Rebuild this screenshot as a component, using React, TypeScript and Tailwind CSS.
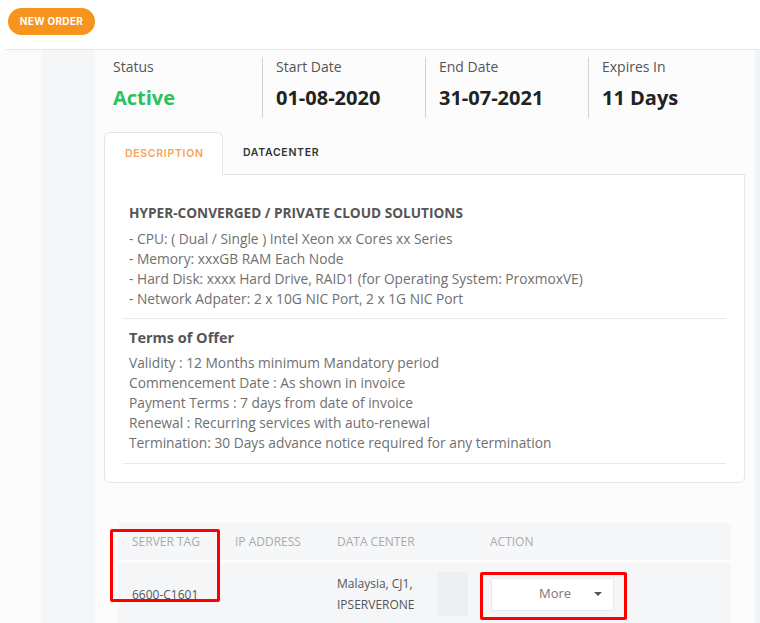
import React from 'react';

const stats = [
  { label: 'Status', value: 'Active', green: true },
  { label: 'Start Date', value: '01-08-2020' },
  { label: 'End Date', value: '31-07-2021' },
  { label: 'Expires In', value: '11 Days' },
];

const specs = [
  '- CPU: ( Dual / Single ) Intel Xeon xx Cores xx Series',
  '- Memory: xxxGB RAM Each Node',
  '- Hard Disk: xxxx Hard Drive, RAID1 (for Operating System: ProxmoxVE)',
  '- Network Adpater: 2 x 10G NIC Port, 2 x 1G NIC Port',
];

const terms = [
  'Validity : 12 Months minimum Mandatory period',
  'Commencement Date : As shown in invoice',
  'Payment Terms : 7 days from date of invoice',
  'Renewal : Recurring services with auto-renewal',
  'Termination: 30 Days advance notice required for any termination',
];

export default function App() {
  return (
    <div className="w-[760px] h-[623px] overflow-hidden bg-white font-['Open_Sans',sans-serif]">
      {/* --- Top bar --- */}
      <div className="h-[50px] ml-[5px] pl-[3px] pt-[7px] border-b border-[#e4e6e8]">
        <button className="h-[27px] w-[87px] rounded-full bg-[#f7941d] text-white text-[10px] font-bold tracking-[0.3px] font-['Inter',sans-serif]">
          NEW ORDER
        </button>
      </div>

      {/* --- Body --- */}
      <div className="flex h-[573px]">
        <div className="w-[41px] bg-[#fbfbfb]" />
        <div className="w-[54px] bg-[#f4f6f8]" />

        <main className="w-[660px] bg-[#fcfcfc] pl-[4px]">
          {/* Stats row */}
          <div className="flex mt-[7px]">
            {stats.map((s, i) => (
              <div
                key={s.label}
                className={
                  i === 0
                    ? 'w-[163px] h-[61px] pl-[14px]'
                    : 'w-[163px] h-[61px] pl-[13px] border-l border-[#cfd2d4]'
                }
              >
                <div className="text-[14px] leading-[20px] text-[#555]">{s.label}</div>
                <div
                  className={
                    s.green
                      ? 'mt-[7px] text-[20px] leading-[28px] font-bold text-[#2ac35b]'
                      : 'mt-[7px] text-[20px] leading-[28px] font-bold text-[#222]'
                  }
                >
                  {s.value}
                </div>
              </div>
            ))}
          </div>

          {/* Tabs */}
          <div className="ml-[5px] mt-[14px] w-[641px]">
            <div className="flex h-[42px]">
              <div className="w-[119px] h-[43px] pl-[20px] flex items-center border border-b-0 border-[#e3e5e7] rounded-t-md bg-white relative z-10 text-[10.5px] font-semibold tracking-[0.7px] text-[#f7a35a] font-['Inter',sans-serif]">
                DESCRIPTION
              </div>
              <div className="pl-[20px] flex items-center text-[10.5px] font-semibold tracking-[0.7px] text-[#333] font-['Inter',sans-serif]">
                DATACENTER
              </div>
            </div>
            <div className="h-[309px] border border-[#e3e5e7] rounded-b-md bg-white px-[18px]">
              <div className="pt-[28px] pb-[9px] pl-[6px] border-b border-[#e6e8ea]">
                <div className="text-[13.65px] leading-[20px] font-bold text-[#555]">
                  HYPER-CONVERGED / PRIVATE CLOUD SOLUTIONS
                </div>
                <div className="mt-[6px]">
                  {specs.map((t) => (
                    <div key={t} className="text-[13.75px] leading-[20px] text-[#707070]">{t}</div>
                  ))}
                </div>
              </div>
              <div className="pt-[9px] pb-[10px] pl-[6px] border-b border-[#e6e8ea]">
                <div className="text-[14.5px] leading-[20px] font-bold text-[#555]">Terms of Offer</div>
                <div className="mt-[5px]">
                  {terms.map((t) => (
                    <div key={t} className="text-[13.75px] leading-[20px] text-[#707070]">{t}</div>
                  ))}
                </div>
              </div>
            </div>
          </div>

          {/* Server table */}
          <div className="relative ml-[19px] mt-[40px] w-[613px]">
            <div className="flex items-center h-[37px] bg-[#f5f7f9] text-[12px] text-[#ababab]">
              <div className="w-[103px] pl-[14px]">SERVER TAG</div>
              <div className="w-[102px] pl-[14px]">IP ADDRESS</div>
              <div className="w-[153px] pl-[14px]">DATA CENTER</div>
              <div className="pl-[14px]">ACTION</div>
            </div>
            <div className="flex items-center h-[62px] mt-[3px] bg-[#f4f6f8] text-[12px] text-[#555]">
              <div className="w-[103px] pl-[14px] pt-[2px]">6600-C1601</div>
              <div className="w-[102px]" />
              <div className="w-[115px] pl-[14px] leading-[21px]">
                <div>Malaysia, CJ1,</div>
                <div>IPSERVERONE</div>
              </div>
              <div className="w-[30px] h-[44px] bg-[#eeeff0]" />
              <div className="pl-[23px]">
                <button className="w-[123px] h-[33px] bg-white border border-[#e8e9ea] flex items-center pl-[47px] text-[13px] text-[#777]">
                  More
                  <span className="ml-[23px] w-0 h-0 border-l-[4px] border-r-[4px] border-t-[4px] border-l-transparent border-r-transparent border-t-[#555]" />
                </button>
              </div>
            </div>

            {/* Annotation boxes */}
            <div className="absolute left-[-8px] top-[6px] w-[110px] h-[73px] border-[3px] border-[#ff0000] rounded-[2px]" />
            <div className="absolute left-[362px] top-[49px] w-[147px] h-[48px] border-[3px] border-[#ff0000] rounded-[2px]" />
          </div>
        </main>

        <div className="flex-1 bg-[#f2f5f7]" />
      </div>
    </div>
  );
}
